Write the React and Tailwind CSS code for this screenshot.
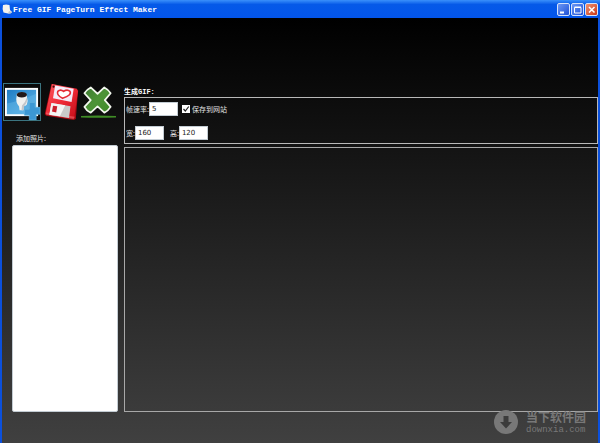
import { useState } from "react";

function AddPhotoIcon() {
  return (
    <svg viewBox="0 0 37 37" className="w-full h-full" aria-hidden="true">
      <defs>
        <linearGradient id="sky" x1="0" y1="0" x2="1" y2="1">
          <stop offset="0" stopColor="#1f7cc4" />
          <stop offset="1" stopColor="#63b9ea" />
        </linearGradient>
      </defs>
      <rect x="1" y="4" width="34" height="29" fill="#fdfdfd" />
      <rect x="3" y="6" width="30" height="25" fill="url(#sky)" />
      <path d="M3 31V20Q15 18 33 10V31Z" fill="#6fbdec" opacity="0.4" />
      <path
        d="M13 12Q12 9 18 8.500Q24 9 23.500 13Q25 17 23.500 21Q22 23 20.500 22L20 27H16L15.500 23Q11.500 19 13 12Z"
        fill="#f1f1ef"
      />
      <path d="M21 22Q24.500 20 23.500 14Q22 19 18.500 22L18 27H20Z" fill="#c3c6ca" />
      <ellipse cx="18.300" cy="11" rx="5.300" ry="2.800" fill="#22191a" />
      <path
        d="M26 19H32V24H37V31H33V37H26V32H21V26H26Z"
        fill="#3c98d4"
        stroke="#5fb0de"
        strokeWidth="0.800"
      />
    </svg>
  );
}

function SaveIcon() {
  return (
    <svg viewBox="0 1 33 34" preserveAspectRatio="none" className="w-full h-full" aria-hidden="true">
      <defs>
        <linearGradient id="disk" x1="0" y1="0" x2="1" y2="1">
          <stop offset="0" stopColor="#ff5961" />
          <stop offset="0.500" stopColor="#ef2a36" />
          <stop offset="1" stopColor="#c50d18" />
        </linearGradient>
      </defs>
      <path d="M7 1L31 6Q33 7 32 9L30 34L28 35L2 31Q0 30 1 28Z" fill="#a50812" />
      <path d="M7.500 1L31 5.500L32 8L28.500 33L1.500 29Z" fill="url(#disk)" />
      <path d="M2 28L29 32L28 34L2 30Z" fill="#f56a70" opacity="0.600" />
      <path d="M10.500 2.500L28 5.500L26 18L8.500 14.500Z" fill="#f5ecf8" />
      <path
        d="M17.500 14.500Q11.500 11.500 13 8Q15.500 5.500 18.500 8Q22 5.500 24.500 8Q26.500 11.500 17.500 14.500Z"
        fill="#fff"
        stroke="#e52b35"
        strokeWidth="1.500"
      />
      <path d="M7 19L25 22L23.500 33L5 30Z" fill="#c9cac9" />
      <path d="M7 19L20 21L15 31.500L5 30Z" fill="#f4f4f3" />
      <path d="M8.500 21.500L12.500 22L11.500 28L7.500 27Z" fill="#c9202c" />
      <circle cx="9" cy="3.500" r="1" fill="#3d0c0e" />
    </svg>
  );
}

function DeleteIcon() {
  return (
    <svg viewBox="0 0 36 36" className="w-full h-full" aria-hidden="true">
      <defs>
        <linearGradient id="leaf" x1="0" y1="0" x2="1" y2="1">
          <stop offset="0" stopColor="#3d7a32" />
          <stop offset="0.500" stopColor="#4d9437" />
          <stop offset="1" stopColor="#3f8a28" />
        </linearGradient>
      </defs>
      <path
        d="M10 3L17 9.500L24 3Q28 5 30.500 9L24.500 16L30.500 23Q28 27 24 29L17 22.500L10 29Q5.500 27 3.500 23L10 16L3.500 9Q6 5 10 3Z"
        fill="url(#leaf)"
        stroke="#f3f8ee"
        strokeWidth="1.800"
        strokeLinejoin="round"
      />
      <path d="M0 32.500Q17 31.500 36 32.500V34Q17 34.500 0 34Z" fill="#3f8c26" />
    </svg>
  );
}

function AppIcon() {
  return (
    <svg viewBox="0 0 10 10" className="w-[10px] h-[10px]" aria-hidden="true">
      <path d="M1 1Q4 0 7.500 1L8 6L10 8Q9 10 6 9.500L1.500 8.500Q0 5 1 1Z" fill="#f3f3ee" />
      <path d="M7 7L10 8Q9 10 6 9.500Z" fill="#c4c8cf" />
    </svg>
  );
}

const windowButtons = [
  {
    label: "Minimize",
    className: "bg-linear-to-br from-[#6c97f4] to-[#1f4fd6]",
    icon: <path d="M2 8.500H6" strokeWidth="2" />,
  },
  {
    label: "Maximize",
    className: "bg-linear-to-br from-[#6c97f4] to-[#1f4fd6]",
    icon: <path d="M2.500 3.500H9V9H2.500ZM2.500 3H9" />,
  },
  {
    label: "Close",
    className: "bg-linear-to-br from-[#ee9070] to-[#c93310]",
    icon: <path d="M3 3L8.500 8.500M8.500 3L3 8.500" strokeWidth="1.500" />,
  },
];

function TitleBar() {
  return (
    <header className="flex items-center h-[18px] px-0.5 bg-linear-to-b/srgb from-[#3a90fb] via-[#0559e8] via-25% to-[#0355ea]">
      <AppIcon />
      <h1 className="flex-1 pt-px ml-px font-['Liberation_Mono',monospace] text-[8px] leading-[10px] font-bold text-white">
        Free GIF PageTurn Effect Maker
      </h1>
      <div className="flex gap-px">
        {windowButtons.map((button) => (
          <button
            key={button.label}
            type="button"
            aria-label={button.label}
            className={`size-[13px] border border-[#d5e2fb] rounded-xs ${button.className}`}
          >
            <svg viewBox="0 0 11 11" className="w-full h-full" fill="none" stroke="#fff">
              {button.icon}
            </svg>
          </button>
        ))}
      </div>
    </header>
  );
}

function NumberField({ id, label, value, onChange }) {
  return (
    <div className="flex items-center">
      <label htmlFor={id}>{label}</label>
      <input
        id={id}
        type="text"
        value={value}
        onChange={(e) => onChange(e.target.value)}
        className="w-[29px] h-[14px] px-0.5 bg-white border border-[#c3ccd3] text-[#222] font-['DejaVu_Sans',sans-serif] text-[7px] leading-[10px]"
      />
    </div>
  );
}

function Watermark() {
  return (
    <div className="absolute right-3 bottom-2 flex items-center gap-2 text-[#787878]">
      <svg viewBox="0 0 24 24" className="size-6" aria-hidden="true">
        <circle cx="12" cy="12" r="12" fill="#787878" />
        <path d="M9.500 6H14.500V12H18L12 18.500L6 12H9.500Z" fill="#3c3c3c" />
      </svg>
      <div>
        <p className="font-['Noto_Sans_CJK_SC',sans-serif] text-[12px] leading-[17px] font-bold">当下软件园</p>
        <p className="font-['Liberation_Mono',monospace] text-[9px] leading-[10px]">downxia.com</p>
      </div>
    </div>
  );
}

export default function App() {
  const [frameRate, setFrameRate] = useState("5");
  const [width, setWidth] = useState("160");
  const [height, setHeight] = useState("120");
  const [saveToSite, setSaveToSite] = useState(true);

  return (
    <div className="flex flex-col min-h-screen bg-[#0b50dc] font-['Noto_Sans_CJK_SC',sans-serif] text-[7px] leading-[10px] text-[#e4e4e4]">
      <TitleBar />
      <main className="relative flex-1 flex gap-1.5 mx-0.5 pt-[65px] pb-[31px] bg-linear-to-b/srgb from-black to-[#404040]">
        <section className="flex flex-col w-[116px] shrink-0">
          <div className="flex items-center justify-between h-[38px] pl-px pr-0.5">
            <button type="button" aria-label="添加照片" className="w-[38px] h-[38px] border border-[#3b7480]">
              <AddPhotoIcon />
            </button>
            <button type="button" aria-label="保存" className="w-[35px] h-[36px]">
              <SaveIcon />
            </button>
            <button type="button" aria-label="删除" className="w-[35px] h-[36px]">
              <DeleteIcon />
            </button>
          </div>
          <h2 id="photos" className="mt-3 ml-3.5">
            添加照片:
          </h2>
          <ul aria-labelledby="photos" className="flex-1 mt-0.5 ml-2.5 bg-white border border-[#c3ccd3] rounded-xs" />
        </section>

        <section className="flex-1 flex flex-col pt-1">
          <h2 className="font-['Liberation_Mono','Noto_Sans_CJK_SC',monospace] font-bold text-white">生成GIF:</h2>
          <form className="flex flex-col gap-2.5 h-[47px] pt-1 pl-px border border-[#b8b8b8]">
            <div className="flex items-center gap-1">
              <NumberField id="rate" label="帧速率:" value={frameRate} onChange={setFrameRate} />
              <label className="flex items-center gap-0.5">
                <input
                  type="checkbox"
                  checked={saveToSite}
                  onChange={(e) => setSaveToSite(e.target.checked)}
                  className="peer sr-only"
                />
                <span className="size-2 bg-white text-transparent peer-checked:text-[#222]">
                  <svg viewBox="0 0 8 8" className="w-full h-full" fill="none" stroke="currentColor" strokeWidth="1.200">
                    <path d="M1.500 4L3.300 6L6.800 1.500" />
                  </svg>
                </span>
                保存到网站
              </label>
            </div>
            <div className="flex items-center gap-1.5">
              <NumberField id="width" label="宽:" value={width} onChange={setWidth} />
              <NumberField id="height" label="高:" value={height} onChange={setHeight} />
            </div>
          </form>
          <div className="flex-1 mt-[3px] border border-[#a8a8a8]" />
        </section>
        <Watermark />
      </main>
    </div>
  );
}
